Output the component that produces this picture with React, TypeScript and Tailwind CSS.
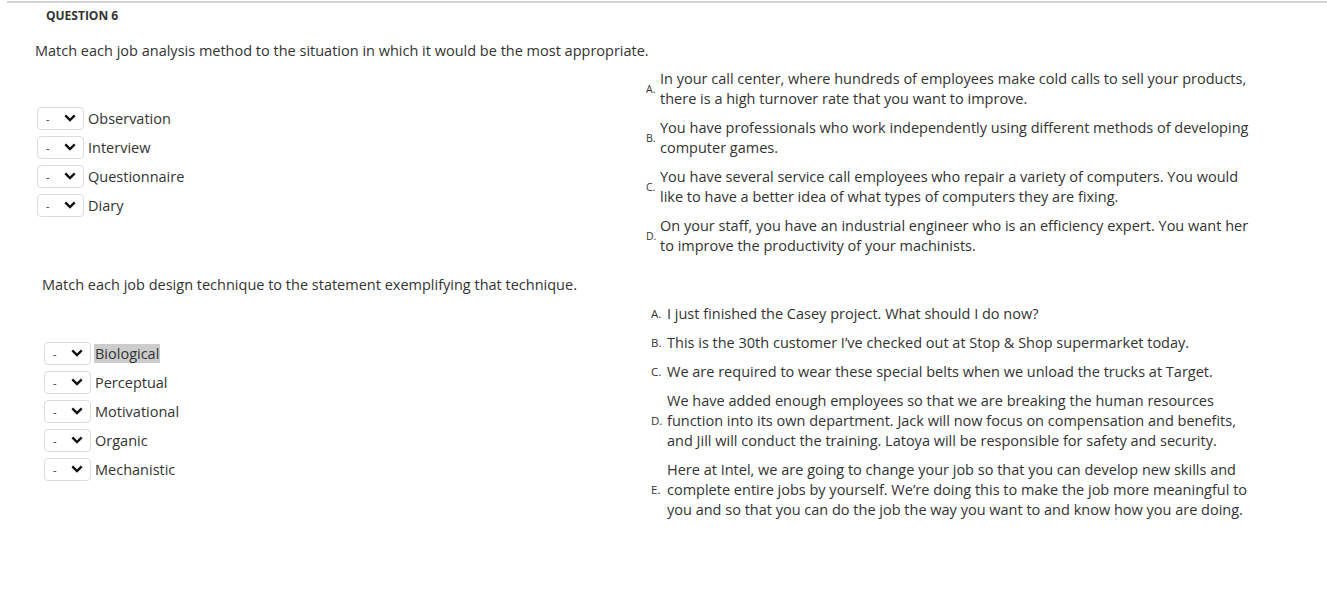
import React from "react";

const firstMethods = ["Observation", "Interview", "Questionnaire", "Diary"];

const firstSituations = [
  {
    letter: "A.",
    text: "In your call center, where hundreds of employees make cold calls to sell your products, there is a high turnover rate that you want to improve.",
  },
  {
    letter: "B.",
    text: "You have professionals who work independently using different methods of developing computer games.",
  },
  {
    letter: "C.",
    text: "You have several service call employees who repair a variety of computers. You would like to have a better idea of what types of computers they are fixing.",
  },
  {
    letter: "D.",
    text: "On your staff, you have an industrial engineer who is an efficiency expert. You want her to improve the productivity of your machinists.",
  },
];

const techniques = ["Biological", "Perceptual", "Motivational", "Organic", "Mechanistic"];

const statements = [
  { letter: "A.", text: "I just finished the Casey project. What should I do now?" },
  {
    letter: "B.",
    text: "This is the 30th customer I\u2019ve checked out at Stop & Shop supermarket today.",
  },
  {
    letter: "C.",
    text: "We are required to wear these special belts when we unload the trucks at Target.",
  },
  {
    letter: "D.",
    text: "We have added enough employees so that we are breaking the human resources function into its own department. Jack will now focus on compensation and benefits, and Jill will conduct the training. Latoya will be responsible for safety and security.",
  },
  {
    letter: "E.",
    text: "Here at Intel, we are going to change your job so that you can develop new skills and complete entire jobs by yourself. We\u2019re doing this to make the job more meaningful to you and so that you can do the job the way you want to and know how you are doing.",
  },
];

const Chevron = () => (
  <svg width="12" height="8" viewBox="0 0 12 8" className="shrink-0">
    <path d="M1.3 1.4 L6 6 L10.7 1.4" fill="none" stroke="#111" strokeWidth="2.4" />
  </svg>
);

const DashSelect = () => (
  <div className="flex h-[23px] w-[47px] shrink-0 items-center justify-between rounded-[4px] border border-[#dcdcdc] bg-white pl-[8px] pr-[7px]">
    <span className="text-[11px] leading-none text-[#333]">-</span>
    <Chevron />
  </div>
);

const MatchRow = ({ label, highlight }: { label: string; highlight?: boolean }) => (
  <div className="flex items-center gap-[3px]">
    <DashSelect />
    <span className={`px-[1px] leading-[19px] ${highlight ? "bg-[#cccccc]" : ""}`}>{label}</span>
  </div>
);

export default function App() {
  return (
    <div
      className="min-h-[607px] w-[1327px] bg-white text-[14.5px] text-[#333]"
      style={{ fontFamily: '"Open Sans", "Liberation Sans", sans-serif' }}
    >
      <div className="pl-[7px] pt-[1px]">
        <div className="border-t-2 border-[#d4d4d4]" />
      </div>

      <div className="pl-[46px] pt-[5px] text-[12px] font-bold leading-[16px] text-[#333]">
        QUESTION 6
      </div>

      <div className="pl-[35px] pt-[17px] leading-[20px]">
        Match each job analysis method to the situation in which it would be the most appropriate.
      </div>

      {/* section 1 */}
      <div className="flex items-center pl-[37px] pt-[8px]">
        <div className="flex w-[609px] shrink-0 flex-col gap-[6px] pb-[2px]">
          {firstMethods.map((m) => (
            <MatchRow key={m} label={m} />
          ))}
        </div>
        <div className="flex flex-col gap-[9px]">
          {firstSituations.map((s) => (
            <div key={s.letter} className="flex items-center">
              <span className="w-[14px] shrink-0 text-[10.5px] leading-none">{s.letter}</span>
              <p className="w-[600px] leading-[20px]">{s.text}</p>
            </div>
          ))}
        </div>
      </div>

      {/* section 2 */}
      <div className="pl-[42px] pt-[19px] leading-[20px]">
        Match each job design technique to the statement exemplifying that technique.
      </div>

      <div className="flex items-center pl-[44px] pt-[9px]">
        <div className="flex w-[607px] shrink-0 flex-col gap-[6px] pb-[2px]">
          {techniques.map((t, i) => (
            <MatchRow key={t} label={t} highlight={i === 0} />
          ))}
        </div>
        <div className="flex flex-col gap-[9px]">
          {statements.map((s) => (
            <div key={s.letter} className="flex items-center">
              <span className="w-[16px] shrink-0 text-[11.5px] leading-none">{s.letter}</span>
              <p className="w-[598px] leading-[20px]">{s.text}</p>
            </div>
          ))}
        </div>
      </div>
    </div>
  );
}
